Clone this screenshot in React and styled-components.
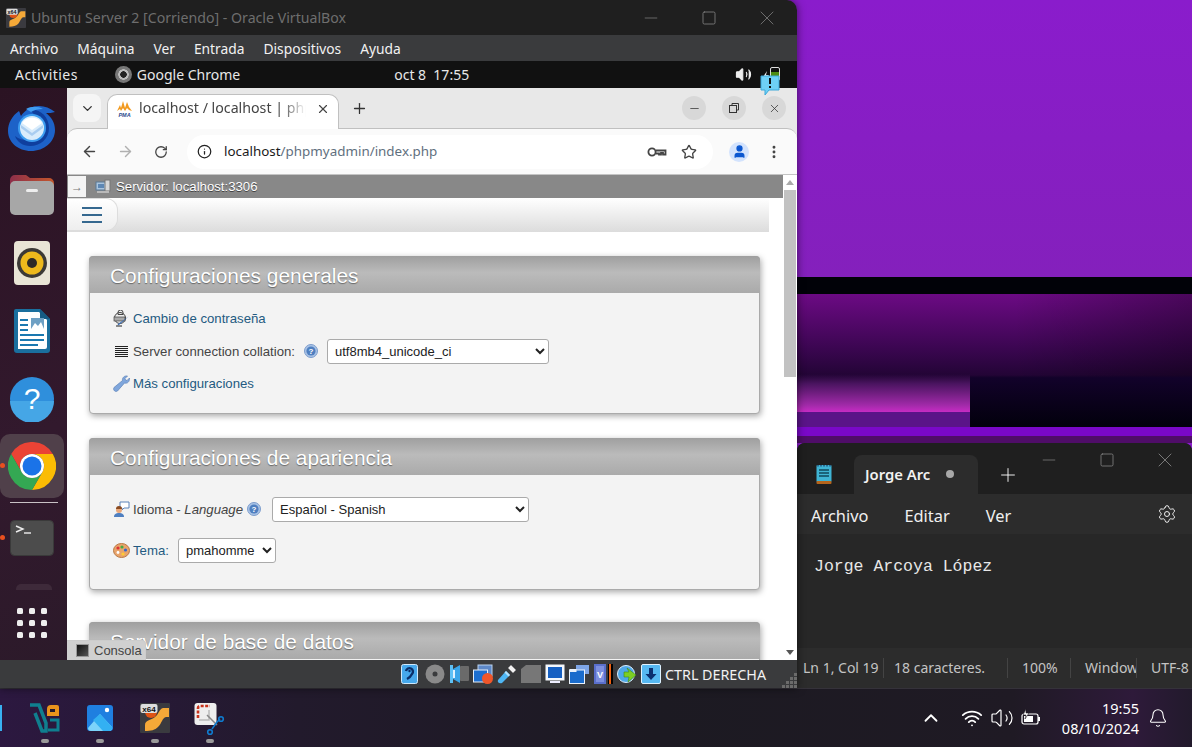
import React from 'react';
import styled, { createGlobalStyle } from 'styled-components';
import { ArrowLeft, ArrowRight, RotateCw, Star, EllipsisVertical, Plus, X, Minus, Square, Settings, Bell, ChevronUp, ChevronDown, Wifi, Volume2, Info, User } from 'lucide-react';

const GlobalStyle = createGlobalStyle`
	html, body {
		margin: 0;
		padding: 0;
		width: 1192px;
		height: 747px;
		overflow: hidden;
		background: #1c1a24;
	}
	* { box-sizing: border-box; }
`;

const Thunderbird = () => (
	<svg width="50" height="50" viewBox="0 0 50 50">
		<path d="M12 9C5 14 1 21 1 29c0 11 10 20 23 20s24-9 24-21c0-8-4-13-9-17 3 0 6 0 9-1-5-4-10-6-16-6-8 0-14 4-18 10-1-2-1-3-2-5z" fill="#1d62c8" />
		<path d="M22 8c10-2 20 6 20 18 0 11-9 18-19 18-7 0-13-4-15-10 4 3 8 4 12 4 7 0 13-5 13-12 0-6-4-14-11-18z" fill="#0f3f9e" />
		<path d="M19 7c5-3 12-3 17 0-5 0-9 1-12 3z" fill="#3f9cf0" />
		<circle cx="25" cy="26" r="14" fill="#3d9df0" />
		<circle cx="25" cy="26" r="12" fill="#d9ecfb" />
		<path d="M15 21l10 7 10-7a12 12 0 0 0-20 0z" fill="#fff" />
		<path d="M14 23l11 8 11-8v3l-11 8-11-8z" fill="#a9cdf0" />
	</svg>
);

const FolderIcon = () => (
	<svg width="46" height="42" viewBox="0 0 46 42">
		<defs>
			<linearGradient id="folderTab" x1="0" x2="1" y1="0" y2="0">
				<stop offset="0" stopColor="#8d2f4a" />
				<stop offset="1" stopColor="#c4562c" />
			</linearGradient>
		</defs>
		<path d="M1 6a5 5 0 0 1 5-5h11l4 3h19a5 5 0 0 1 5 5v10H1z" fill="url(#folderTab)" />
		<rect x="1" y="7" width="44" height="34" rx="5" fill="#a7a7a7" />
		<rect x="17" y="15" width="12" height="3" rx="1.5" fill="#eee" />
	</svg>
);

const RhythmIcon = () => (
	<svg width="38" height="46" viewBox="0 0 38 46">
		<rect x="1" y="1" width="36" height="44" rx="4" fill="#e9e5d6" />
		<circle cx="19" cy="23" r="15" fill="#3c3a36" />
		<circle cx="19" cy="23" r="11.5" fill="#edb91c" />
		<circle cx="19" cy="23" r="5" fill="#2c2a26" />
	</svg>
);

const WriterIcon = () => (
	<svg width="38" height="46" viewBox="0 0 38 46">
		<path d="M3 1h24l10 10v31a3 3 0 0 1-3 3H4a3 3 0 0 1-3-3V3a2 2 0 0 1 2-2z" fill="#1a6f9e" />
		<path d="M5 4h21l8 8v27a2 2 0 0 1-2 2H5z" fill="#fff" />
		<path d="M27 1l10 10H27z" fill="#155b84" />
		<path d="M7 11h8v2H7zM7 16h8v2H7zM7 21h8v2H7zM7 26h24v2H7zM7 31h24v2H7zM7 36h18v2H7z" fill="#1a78b0" />
		<rect x="18" y="10" width="13" height="11" fill="#6ea0c4" />
		<path d="M18 21l4-6 3 3 3-4 3 7z" fill="#fff" />
	</svg>
);

const HelpIcon = () => (
	<svg width="46" height="46" viewBox="0 0 46 46">
		<circle cx="23" cy="23" r="22" fill="#2f8fdc" />
		<path d="M1 25a22 22 0 0 0 44 0z" fill="#45a6e6" />
		<text x="23" y="33" textAnchor="middle" fontFamily="Liberation Sans, sans-serif" fontSize="30" fill="#fff">?</text>
	</svg>
);

const ChromeLogo = ({ size = 48 }) => (
	<svg width={size} height={size} viewBox="0 0 48 48">
		<path d="M24 12H44.8A24 24 0 0 0 3.2 12L13.6 30A12 12 0 0 1 24 12z" fill="#ea4335" />
		<path d="M44.8 12H24A12 12 0 0 1 34.4 30L24 48A24 24 0 0 0 44.8 12z" fill="#fbbc04" />
		<path d="M3.2 12L13.6 30A12 12 0 0 0 34.4 30L24 48A24 24 0 0 1 3.2 12z" fill="#34a853" />
		<circle cx="24" cy="24" r="12" fill="#fff" />
		<circle cx="24" cy="24" r="9.5" fill="#1a73e8" />
	</svg>
);

const TerminalIcon = () => (
	<svg width="44" height="36" viewBox="0 0 44 36">
		<rect x="0.5" y="0.5" width="43" height="35" rx="4" fill="#4c4c4c" stroke="#3a3a3a" />
		<path d="M6 6l7 3-7 3" fill="none" stroke="#eee" strokeWidth="1.4" />
		<path d="M14 13h7" stroke="#eee" strokeWidth="1.4" />
	</svg>
);

const VBoxLogo = ({ size = 20 }) => (
	<svg width={size} height={size} viewBox="0 0 30 30">
		<rect width="30" height="30" rx="1" fill="#3a3a3f" />
		<path d="M5 9a6 6 0 0 0 12 0z" fill="#df5314" />
		<path d="M5 28v-6c0-5 7-5 10-8 4-3 4-8 8-9h6v9h-3c-4 1-4 6-8 10-3 3-7 4-13 4z" fill="#f5a938" />
		<rect x="0.5" y="1" width="17" height="9" rx="2" fill="#ddd" />
		<text x="9" y="8.500" textAnchor="middle" fontFamily="Liberation Sans, sans-serif" fontWeight="700" fontSize="8" fill="#111">x64</text>
	</svg>
);

const PmaLogo = () => (
	<svg width="17" height="16" viewBox="0 0 17 16">
		<path d="M1 10l3-6 1 3 2-7 2 7 2-6 2 5 3 4-3-1-2-2-2 3-2-3-2 3-1-2z" fill="#f29a1f" />
		<text x="8.500" y="16" textAnchor="middle" fontFamily="Liberation Sans, sans-serif" fontWeight="700" fontStyle="italic" fontSize="5.500" fill="#2a4a8e">PMA</text>
	</svg>
);

const KeyIcon = () => (
	<svg width="20" height="12" viewBox="0 0 20 12" fill="none" stroke="#444" strokeWidth="1.8">
		<circle cx="5" cy="6" r="3.6" />
		<path d="M9 4.500h9.500v4h-2.500v-1.600h-2v1.600h-2V7.500H9" />
	</svg>
);

const ServerIcon = () => (
	<svg width="16" height="15" viewBox="0 0 16 15">
		<rect x="1" y="3" width="10" height="8" fill="#a9c4de" stroke="#5b7894" />
		<rect x="3" y="5" width="6" height="4" fill="#5d87b4" />
		<rect x="10" y="1" width="5" height="11" fill="#d8d8d8" stroke="#777" />
		<rect x="2" y="12" width="12" height="2" fill="#b9b9b9" />
	</svg>
);

const PasswordIcon = () => (
	<svg width="17" height="17" viewBox="0 0 17 17">
		<circle cx="7" cy="8" r="5.500" fill="#eee" stroke="#444" />
		<rect x="1" y="7" width="11" height="4" fill="#aaa" stroke="#444" strokeWidth=".7" />
		<path d="M5 2.500a2.500 2.500 0 0 1 5 0v2H5z" fill="none" stroke="#444" />
		<path d="M15.500 6.500L6 15l-1.500.5.5-1.500z" fill="#3b6fb6" />
		<path d="M3 16h6" stroke="#222" />
	</svg>
);

const CollationIcon = () => (
	<svg width="17" height="11" viewBox="0 0 17 11">
		<path d="M2 .5h13M2 2.500h13M2 4.500h13M2 6.500h13M2 8.500h13M2 10.500h13" stroke="#222" />
	</svg>
);

const WrenchIcon = () => (
	<svg width="17" height="17" viewBox="0 0 17 17">
		<path d="M1 12.500L9.500 5.500c-.5-2.500 1.500-5 5-4.500l-2.500 2.500.5 1.500 1.500.5L16.500 3c.3 3.500-2 6-5 5l-7 8c-2 1.500-5-1-3.500-3.500z" fill="#7fa6dc" stroke="#5b82b8" strokeWidth=".7" />
	</svg>
);

const HelpBadge = () => (
	<svg width="14" height="14" viewBox="0 0 14 14">
		<circle cx="7" cy="7" r="6.500" fill="#a9c3e6" stroke="#7d9dcc" />
		<circle cx="7" cy="7" r="4.600" fill="#4f7fc0" />
		<text x="7" y="10" textAnchor="middle" fontFamily="Liberation Sans, sans-serif" fontWeight="700" fontSize="8" fill="#fff">?</text>
	</svg>
);

const LanguageIcon = () => (
	<svg width="17" height="17" viewBox="0 0 17 17">
		<path d="M7 1h9v6H11l-2 2V7H7z" fill="#fff" stroke="#5b82b8" />
		<circle cx="6" cy="9" r="3" fill="#e9a77a" />
		<path d="M1 16c0-3 2-4 5-4s5 1 5 4z" fill="#4f7fc0" />
		<path d="M3 8a3 3 0 0 1 6 0z" fill="#8a4a20" />
	</svg>
);

const PaletteIcon = () => (
	<svg width="17" height="15" viewBox="0 0 17 15">
		<ellipse cx="8.500" cy="7.500" rx="8" ry="7" fill="#e8a46c" stroke="#b87844" />
		<circle cx="5" cy="5" r="1.600" fill="#d33" />
		<circle cx="9" cy="4" r="1.600" fill="#4a4" />
		<circle cx="12.500" cy="7" r="1.600" fill="#36c" />
		<circle cx="10" cy="11" r="1.600" fill="#fc3" />
		<circle cx="5" cy="9.500" r="1.400" fill="#fff" />
	</svg>
);

const NotepadIcon = () => (
	<svg width="16" height="20" viewBox="0 0 16 20">
		<rect x="0.500" y="1" width="15" height="17" rx="1" fill="#3fb4d4" />
		<rect x="0.500" y="17" width="15" height="3" rx="1" fill="#b5651d" />
		<path d="M3 6h10M3 9h10M3 12h10" stroke="#10485c" strokeWidth="1.300" />
		<path d="M2 1v1.500M5 1v1.500M8 1v1.500M11 1v1.500M14 1v1.500" stroke="#125" />
	</svg>
);

const BatteryTray = () => (
	<svg width="20" height="18" viewBox="0 0 20 18" fill="none">
		<rect x="1" y="5" width="16" height="10" rx="2" stroke="#fff" strokeWidth="1.200" />
		<rect x="17" y="8" width="2" height="4" fill="#fff" />
		<rect x="3" y="7" width="9" height="6" fill="#fff" />
		<path d="M5 0L2 6h3l-1 4 4-6H5z" fill="#fff" stroke="#1e1a20" strokeWidth=".6" />
	</svg>
);

const ChargeBolt = () => (
	<svg width="6" height="10" viewBox="0 0 6 10">
		<path d="M4 0L0 6h3L2 10l4-6H3z" fill="#eee" />
	</svg>
);

const HdIcon = () => (
	<svg width="17" height="20" viewBox="0 0 17 20">
		<rect x="0.500" y="0.500" width="16" height="19" rx="2" fill="#46a8ec" stroke="#cfe8fb" />
		<path d="M5 7a3.500 3.500 0 1 1 6 3c-1 2-3 4-5 5" fill="none" stroke="#0a2f6a" strokeWidth="2.400" />
		<circle cx="8.500" cy="7" r="1.200" fill="#0a2f6a" />
	</svg>
);

const DiscIcon = () => (
	<svg width="20" height="20" viewBox="0 0 20 20">
		<circle cx="10" cy="10" r="9.500" fill="#8a8a8a" />
		<circle cx="10" cy="10" r="2.500" fill="#3a3b3d" />
	</svg>
);

const AudioIcon = () => (
	<svg width="20" height="20" viewBox="0 0 20 20">
		<rect x="11" y="2" width="9" height="15" rx="1" fill="#6a6a6a" />
		<path d="M1 1h3v18H1z" fill="#5dc0f5" />
		<path d="M4 5l7-4v18l-7-4z" fill="#3aa6ea" />
		<path d="M4 6h2v8H4z" fill="#dff2ff" />
	</svg>
);

const NetIcon = () => (
	<svg width="20" height="20" viewBox="0 0 20 20">
		<rect x="5" y="1" width="14" height="11" fill="#5d88c8" stroke="#bcd4ef" />
		<rect x="0.500" y="6" width="14" height="12" fill="#1d6fd0" stroke="#e5eef8" />
		<circle cx="14.500" cy="14.500" r="5.500" fill="#f0562a" />
	</svg>
);

const UsbIcon = () => (
	<svg width="20" height="20" viewBox="0 0 20 20">
		<path d="M1 16l8-9 4 4-8 8c-3 1-5-1-4-3z" fill="#4eb6f4" />
		<path d="M11 4l3-3 5 5-3 3z" fill="#f2f2f2" stroke="#888" strokeWidth=".6" />
		<path d="M9 7l4 4-1.500 1.500-4-4z" fill="#b6e1fb" />
	</svg>
);

const SharedFolderIcon = () => (
	<svg width="20" height="18" viewBox="0 0 20 18">
		<path d="M0 4l5-4h15v18H0z" fill="#777" />
	</svg>
);

const DisplayIcon = () => (
	<svg width="20" height="20" viewBox="0 0 20 20">
		<rect x="0.500" y="0.500" width="19" height="16" fill="#f4f8fc" />
		<rect x="3" y="3" width="14" height="11" fill="#1660c2" />
		<rect x="5" y="17" width="10" height="2" fill="#eef" />
	</svg>
);

const MultiIcon = () => (
	<svg width="20" height="20" viewBox="0 0 20 20">
		<rect x="7" y="1" width="13" height="9" fill="#7fa6e6" />
		<rect x="0.500" y="6" width="15" height="13.500" fill="#1a6ccc" stroke="#eaf2fb" />
		<rect x="0.500" y="5" width="7" height="3" fill="#eaf2fb" />
	</svg>
);

const ChipIcon = () => (
	<svg width="14" height="20" viewBox="0 0 14 20">
		<rect x="1" y="0" width="12" height="20" fill="#5a6fcc" />
		<rect x="3" y="2" width="8" height="16" fill="#7d8fdf" />
		<text x="7" y="14" textAnchor="middle" fontFamily="Liberation Sans, sans-serif" fontWeight="700" fontSize="9" fill="#fff">V</text>
	</svg>
);

const GlobeArrow = () => (
	<svg width="20" height="20" viewBox="0 0 20 20">
		<circle cx="9" cy="10" r="8.500" fill="#4ea8e8" stroke="#dcefff" />
		<path d="M10 4l9 7-8 7 1-5H7V8h5z" fill="#7ccf24" stroke="#3d8a10" strokeWidth=".6" />
	</svg>
);

const DownIcon = () => (
	<svg width="20" height="20" viewBox="0 0 20 20">
		<rect x="0.500" y="0.500" width="19" height="19" rx="1.500" fill="#56b8f2" stroke="#dff2ff" />
		<path d="M8 4h4v6h3.500L10 16l-5.500-6H8z" fill="#0b2f70" />
	</svg>
);

const VsIcon = () => (
	<svg width="32" height="30" viewBox="0 0 32 30" fill="none">
		<path d="M1 2h9l7 18v8h-4L6 10" stroke="#0f7f8f" strokeWidth="3.500" />
		<path d="M19 27h10V17H21" stroke="#0f7f8f" strokeWidth="3" />
		<path d="M18 13V6a4 4 0 0 1 4-4h6a2 2 0 0 1 2 2v9z" fill="#e9941c" />
		<rect x="21" y="6" width="5" height="3" fill="#231a2b" />
	</svg>
);

const PhotosIcon = () => (
	<svg width="26" height="26" viewBox="0 0 26 26">
		<rect width="26" height="26" rx="3" fill="#1f7fe0" />
		<path d="M1 23L13 9l12 13a3 3 0 0 1-3 4H4a3 3 0 0 1-3-3z" fill="#7cd3fa" />
		<path d="M13 9l12 13a3 3 0 0 1-3 4h-6L6 15z" fill="#33b0f2" />
		<circle cx="20" cy="5" r="2.200" fill="#fff" />
	</svg>
);

const SnipIcon = () => (
	<svg width="31" height="33" viewBox="0 0 31 33">
		<rect x="0.500" y="0" width="22" height="22" rx="3" fill="#eee" />
		<path d="M4 15V5a2 2 0 0 1 2-2h10" fill="none" stroke="#c8321c" strokeWidth="2.600" strokeDasharray="3 1.500" />
		<path d="M5 17h10V7" fill="none" stroke="#bbb" strokeWidth="1.500" />
		<path d="M13 12l10 10" stroke="#888" strokeWidth="1.500" />
		<path d="M18 26l5-7 3-3" stroke="#0f7cd0" strokeWidth="1.500" fill="none" />
		<circle cx="27" cy="16" r="2.300" fill="none" stroke="#0f7cd0" strokeWidth="1.600" />
		<circle cx="16" cy="29" r="2.300" fill="none" stroke="#0f7cd0" strokeWidth="1.600" />
	</svg>
);

const BalloonIcon = () => (
	<svg width="20" height="21" viewBox="0 0 20 21">
		<path d="M1 1h18v14H9l-4 5v-5H1z" fill="#6ed0f6" stroke="#3fa9da" />
		<rect x="9" y="3" width="2" height="6" fill="#111" />
		<rect x="9" y="11" width="2" height="2" fill="#111" />
	</svg>
);

const GripIcon = () => (
	<svg width="15" height="15" viewBox="0 0 15 15" fill="#6b6b6b">
		<rect x="12" y="0" width="3" height="3" /><rect x="8" y="4" width="3" height="3" /><rect x="12" y="4" width="3" height="3" />
		<rect x="4" y="8" width="3" height="3" /><rect x="8" y="8" width="3" height="3" /><rect x="12" y="8" width="3" height="3" />
		<rect x="0" y="12" width="3" height="3" /><rect x="4" y="12" width="3" height="3" /><rect x="8" y="12" width="3" height="3" /><rect x="12" y="12" width="3" height="3" />
	</svg>
);

const App = () => {
	const dockApps = [<Thunderbird />, <FolderIcon />, <RhythmIcon />, <WriterIcon />, <HelpIcon />];
	return (
		<Desktop>
			<GlobalStyle />
			<Main>
				<VBoxWindow>
					<TitleBar>
						<VBoxLogo />
						<TitleText>Ubuntu Server 2 [Corriendo] - Oracle VirtualBox</TitleText>
						<WinButtons>
							<WinButton><Minus size={20} strokeWidth={0.9} /></WinButton>
							<WinButton><Square size={16} strokeWidth={1.3} /></WinButton>
							<WinButton><X size={24} strokeWidth={0.8} /></WinButton>
						</WinButtons>
					</TitleBar>
					<MenuBar>
						{['Archivo', 'Máquina', 'Ver', 'Entrada', 'Dispositivos', 'Ayuda'].map((m) => <span key={m}>{m}</span>)}
					</MenuBar>
					<GnomeBar>
						<Activities>Activities</Activities>
						<AppName>
							<ChromeCircle />
							Google Chrome
						</AppName>
						<Clock>oct 8&nbsp;&nbsp;17:55</Clock>
						<Tray>
							<Volume2 size={17} color="#eee" fill="#eee" strokeWidth={1.5} />
							<BatteryGroup>
								<ChargeBolt />
								<BatteryBox />
							</BatteryGroup>
							<Balloon><BalloonIcon /></Balloon>
						</Tray>
					</GnomeBar>
					<GuestArea>
						<Dock>
							<DockList>
								{dockApps.map((icon, i) => <DockItem key={i}>{icon}</DockItem>)}
								<DockItem $active $running><ChromeLogo /></DockItem>
								<DockSeparator />
								<DockItem $running><TerminalIcon /></DockItem>
								<DockCut />
							</DockList>
							<AppsGrid>
								{Array.from({ length: 9 }).map((_, i) => <i key={i} />)}
							</AppsGrid>
						</Dock>
						<Chrome>
							<TabStrip>
								<TabSearch><ChevronDown size={15} strokeWidth={2.2} color="#333" /></TabSearch>
								<Tab>
									<PmaLogo />
									<TabTitle>localhost / localhost | phpMyAdmin</TabTitle>
									<X size={14} strokeWidth={2} color="#444" />
								</Tab>
								<NewTab><Plus size={17} strokeWidth={1.8} color="#333" /></NewTab>
								<ChromeControls>
									<ChromeControl><Minus size={13} strokeWidth={1.4} color="#333" /></ChromeControl>
									<ChromeControl>
										<svg width="10" height="10" viewBox="0 0 10 10" fill="none" stroke="#333"><rect x="0.500" y="2.500" width="7" height="7" /><path d="M3 2.500V.5h6.500V7H7.500" /></svg>
									</ChromeControl>
									<ChromeControl><X size={13} strokeWidth={1.4} color="#333" /></ChromeControl>
								</ChromeControls>
							</TabStrip>
							<Toolbar>
								<NavIcon><ArrowLeft size={17} strokeWidth={2} color="#444" /></NavIcon>
								<NavIcon><ArrowRight size={17} strokeWidth={2} color="#b0b0b0" /></NavIcon>
								<NavIcon><RotateCw size={14} strokeWidth={2.2} color="#444" /></NavIcon>
								<Omnibox>
									<Info size={15} strokeWidth={2} color="#222" />
									<Url><b>localhost</b>/phpmyadmin/index.php</Url>
									<OmniIcons>
										<KeyIcon />
										<Star size={16} strokeWidth={2} color="#444" />
									</OmniIcons>
								</Omnibox>
								<Profile><User size={15} color="#0b57d0" fill="#0b57d0" /></Profile>
								<EllipsisVertical size={16} strokeWidth={2.4} color="#444" />
							</Toolbar>
							<Viewport>
								<Page>
									<ServerBar>
										<ArrowBox>→</ArrowBox>
										<ServerIcon />
										<span>Servidor: localhost:3306</span>
									</ServerBar>
									<NavBar>
										<Burger><i /><i /><i /></Burger>
									</NavBar>
									<Panel $h={158}>
										<PanelTitle>Configuraciones generales</PanelTitle>
										<PanelBody>
											<Row $h={24}>
												<RowIcon><PasswordIcon /></RowIcon>
												<PageLink>Cambio de contraseña</PageLink>
											</Row>
											<Row $h={42}>
												<RowIcon><CollationIcon /></RowIcon>
												<span>Server connection collation:</span>
												<HelpSlot $ml={9}><HelpBadge /></HelpSlot>
												<Select $w={222} $ml={9} defaultValue="utf8mb4_unicode_ci">
													<option>utf8mb4_unicode_ci</option>
												</Select>
											</Row>
											<Row $h={22}>
												<RowIcon><WrenchIcon /></RowIcon>
												<PageLink>Más configuraciones</PageLink>
											</Row>
										</PanelBody>
									</Panel>
									<Panel $h={152}>
										<PanelTitle>Configuraciones de apariencia</PanelTitle>
										<PanelBody $top={20}>
											<Row $h={28}>
												<RowIcon><LanguageIcon /></RowIcon>
												<span>Idioma - <em>Language</em></span>
												<HelpSlot $ml={4}><HelpBadge /></HelpSlot>
												<Select $w={257} $ml={11} defaultValue="Español - Spanish">
													<option>Español - Spanish</option>
												</Select>
											</Row>
											<Row $h={28} $mt={13}>
												<RowIcon><PaletteIcon /></RowIcon>
												<PageLink>Tema:</PageLink>
												<Select $w={98} $ml={9} defaultValue="pmahomme">
													<option>pmahomme</option>
												</Select>
											</Row>
										</PanelBody>
									</Panel>
									<Panel $h={152} $mt={32}>
										<PanelTitle>Servidor de base de datos</PanelTitle>
									</Panel>
								</Page>
								<Scrollbar>
									<ScrollArrow $up />
									<ScrollThumb />
									<ScrollArrow />
								</Scrollbar>
								<ConsoleTab>
									<ConsoleIcon />
									Consola
								</ConsoleTab>
							</Viewport>
						</Chrome>
					</GuestArea>
					<StatusBar>
						<HdSlot><HdIcon /></HdSlot>
						<DiscIcon />
						<AudioIcon />
						<NetIcon />
						<UsbIcon />
						<SharedFolderIcon />
						<DisplayIcon />
						<MultiIcon />
						<ChipGroup><ChipIcon /><CpuBar /></ChipGroup>
						<GlobeArrow />
						<DownIcon />
						<HostKey>CTRL DERECHA</HostKey>
						<Grip><GripIcon /></Grip>
					</StatusBar>
				</VBoxWindow>
				<RightSide>
					<Wallpaper>
						<Band $h={277} $bg="linear-gradient(180deg, #8a1ccc 0%, #8420bc 100%)" />
						<Band $h={17} $bg="#010208" />
						<WallScene>
							<GlowColumn>
								<GlowTop />
								<GlowBase />
							</GlowColumn>
							<DarkColumn />
						</WallScene>
						<Band $h={9} $bg="#7a08c8" />
						<Band $h={7} $bg="#4f0d68" />
					</Wallpaper>
					<Notepad>
						<NotepadTabs>
							<NotepadLogo><NotepadIcon /></NotepadLogo>
							<NotepadTab>
								<span>Jorge Arc</span>
								<UnsavedDot />
							</NotepadTab>
							<NotepadPlus><Plus size={22} strokeWidth={1} color="#fff" /></NotepadPlus>
							<NotepadControls>
								<NotepadControl><Minus size={20} strokeWidth={0.8} color="#8f8f8f" /></NotepadControl>
								<NotepadControl><Square size={16} strokeWidth={1.1} color="#8f8f8f" /></NotepadControl>
								<NotepadControl><X size={24} strokeWidth={0.8} color="#8f8f8f" /></NotepadControl>
							</NotepadControls>
						</NotepadTabs>
						<NotepadMenu>
							<span>Archivo</span>
							<span>Editar</span>
							<span>Ver</span>
							<GearSlot><Settings size={20} strokeWidth={1.2} color="#eee" /></GearSlot>
						</NotepadMenu>
						<Editor>Jorge Arcoya López</Editor>
						<NotepadStatus>
							<StatusCell $w={87} $pl={6}>Ln 1, Col 19</StatusCell>
							<StatusCell $w={124} $pl={10}>18 caracteres.</StatusCell>
							<StatusCell $w={63} $pl={14}>100%</StatusCell>
							<StatusCell $w={66} $pl={14}>Windows (CRLF)</StatusCell>
							<StatusCell $w={55} $pl={14} $last>UTF-8</StatusCell>
						</NotepadStatus>
					</Notepad>
				</RightSide>
			</Main>
			<Taskbar>
				<CutIcon />
				<TaskIcons>
					<TaskIcon><VsIcon /><Pill /></TaskIcon>
					<TaskIcon $pt={16}><PhotosIcon /><Pill /></TaskIcon>
					<TaskIcon><VBoxLogo size={30} /><Pill /></TaskIcon>
					<TaskIcon><SnipIcon /><Pill /></TaskIcon>
				</TaskIcons>
				<SystemTray>
					<ChevronSlot><ChevronUp size={22} strokeWidth={2} color="#fff" /></ChevronSlot>
					<Wifi size={22} strokeWidth={2} color="#fff" />
					<Volume2 size={24} strokeWidth={1.2} color="#fff" />
					<BatteryTray />
					<TaskClock>
						<span>19:55</span>
						<span>08/10/2024</span>
					</TaskClock>
					<Bell size={20} strokeWidth={1.3} color="#fff" />
				</SystemTray>
			</Taskbar>
		</Desktop>
	);
};

const Desktop = styled.div`
	width: 1192px;
	height: 747px;
	display: flex;
	flex-direction: column;
	overflow: hidden;
`;

const Main = styled.div`
	display: flex;
	height: 688px;
	background: #8a1ccc;
`;

// VirtualBox window
const VBoxWindow = styled.div`
	position: relative;
	z-index: 1;
	width: 797px;
	height: 688px;
	display: flex;
	flex-direction: column;
	border-top-right-radius: 10px;
	overflow: hidden;
	box-shadow: 0 0 8px rgba(0, 0, 0, 0.55);
`;

const TitleBar = styled.div`
	height: 35px;
	display: flex;
	align-items: center;
	padding-left: 6px;
	background: #1f1f1f;
`;

const TitleText = styled.span`
	margin-left: 5px;
	font: 14.150px "Noto Sans", sans-serif;
	color: #6e6e6e;
`;

const WinButtons = styled.div`
	margin-left: auto;
	margin-right: 1px;
	display: flex;
	color: #808080;
`;

const WinButton = styled.div`
	width: 58px;
	height: 32px;
	display: flex;
	align-items: center;
	justify-content: center;
`;

const MenuBar = styled.div`
	height: 26px;
	display: flex;
	align-items: center;
	gap: 19px;
	padding-left: 10px;
	background: #3a3b3d;
	font: 13.800px "Noto Sans", sans-serif;
	color: #f2f2f2;
`;

const GnomeBar = styled.div`
	height: 27px;
	display: flex;
	align-items: center;
	padding-left: 15px;
	padding-bottom: 1px;
	background: #111;
	font: 14px "Noto Sans", sans-serif;
	color: #e8e8e8;
`;

const Activities = styled.span`
	letter-spacing: 0.45px;
`;

const AppName = styled.div`
	display: flex;
	align-items: center;
	gap: 5px;
	margin-left: 37px;
`;

const ChromeCircle = styled.i`
	width: 17px;
	height: 17px;
	border-radius: 50%;
	background: radial-gradient(circle, #222 0 3px, #bbb 3.500px 5px, #777 5.500px);
`;

const Clock = styled.span`
	margin-left: 154px;
`;

const Tray = styled.div`
	position: relative;
	margin-left: auto;
	margin-right: 17px;
	display: flex;
	align-items: center;
	gap: 11px;
`;

const BatteryGroup = styled.div`
	display: flex;
	align-items: flex-end;
	gap: 1px;
`;

const BatteryBox = styled.i`
	width: 10px;
	height: 14px;
	border: 1px solid #ddd;
	border-radius: 2px;
	background: linear-gradient(180deg, transparent 35%, #4c8a12 35%);
`;

const Balloon = styled.div`
	position: absolute;
	right: 0;
	top: 9px;
	z-index: 3;
`;

const GuestArea = styled.div`
	height: 572px;
	display: flex;
`;

// Ubuntu dock
const Dock = styled.div`
	width: 67px;
	display: flex;
	flex-direction: column;
	background: linear-gradient(160deg, #2b1323, #32192d 60%, #2c1a2a);
`;

const DockList = styled.div`
	height: 502px;
	padding-top: 5px;
	display: flex;
	flex-direction: column;
	align-items: center;
	overflow: hidden;
`;

const DockItem = styled.div`
	position: relative;
	flex: none;
	width: 64px;
	height: ${(p) => (p.$active ? '64px' : '68px')};
	margin: ${(p) => (p.$active ? '1px 0 3px' : '0')};
	margin-left: -3px;
	display: flex;
	align-items: center;
	justify-content: center;
	border-radius: 10px;
	background: ${(p) => (p.$active ? '#50404a' : 'transparent')};

	&::before {
		content: "";
		display: ${(p) => (p.$running ? 'block' : 'none')};
		position: absolute;
		left: 0;
		top: 50%;
		width: 5px;
		height: 5px;
		margin-top: -3px;
		border-radius: 50%;
		background: #e9501f;
	}
`;

const DockSeparator = styled.div`
	flex: none;
	width: 48px;
	height: 1px;
	margin: 1px 0;
	background: #c9c2c6;
`;

const DockCut = styled.div`
	flex: none;
	width: 36px;
	height: 7px;
	margin-top: 12px;
	border-radius: 5px 5px 0 0;
	background: #3e2a3a;
`;

const AppsGrid = styled.div`
	margin-top: 18px;
	padding-left: 17px;
	display: grid;
	grid-template-columns: repeat(3, 6px);
	gap: 6px;

	i {
		width: 6px;
		height: 6px;
		border-radius: 1.500px;
		background: #eee;
	}
`;

// Chrome window
const Chrome = styled.div`
	width: 730px;
	display: flex;
	flex-direction: column;
	background: #e8e8e8;
`;

const TabStrip = styled.div`
	height: 40px;
	display: flex;
	align-items: flex-end;
	padding-left: 6px;
	background: #e8e8e8;
`;

const TabSearch = styled.div`
	width: 28px;
	height: 28px;
	margin-bottom: 6px;
	display: flex;
	align-items: center;
	justify-content: center;
	border-radius: 8px;
	background: #f5f5f5;
`;

const Tab = styled.div`
	position: relative;
	z-index: 1;
	width: 232px;
	height: 35px;
	margin-left: 6px;
	margin-bottom: -1px;
	padding: 0 8px 7px 8px;
	display: flex;
	align-items: center;
	border: 1px solid #c0c0c0;
	border-bottom: none;
	border-radius: 10px 10px 0 0;
	background: #fff;
`;

const TabTitle = styled.span`
	flex: 1;
	margin: 0 10px 2px 6px;
	overflow: hidden;
	white-space: nowrap;
	font: 14.200px "Noto Sans", sans-serif;
	color: #444;
	-webkit-mask-image: linear-gradient(90deg, #000 85%, transparent);
	mask-image: linear-gradient(90deg, #000 85%, transparent);
`;

const NewTab = styled.div`
	width: 24px;
	height: 24px;
	margin: 0 0 8px 8px;
	display: flex;
	align-items: center;
	justify-content: center;
`;

const ChromeControls = styled.div`
	margin-left: auto;
	margin-right: 11px;
	margin-bottom: 8px;
	display: flex;
	gap: 16px;
`;

const ChromeControl = styled.div`
	width: 24px;
	height: 24px;
	display: flex;
	align-items: center;
	justify-content: center;
	border-radius: 50%;
	background: #d8d8d8;
`;

const Toolbar = styled.div`
	height: 47px;
	display: flex;
	align-items: center;
	padding: 0 14px 0 4px;
	border-top: 1px solid #c0c0c0;
	border-bottom: 1px solid #c4c4c4;
	border-radius: 10px 10px 0 0;
	background: #fafafa;
`;

const NavIcon = styled.div`
	width: 36px;
	display: flex;
	justify-content: center;
`;

const Omnibox = styled.div`
	width: 526px;
	height: 34px;
	margin-left: 8px;
	padding: 0 16px 0 10px;
	display: flex;
	align-items: center;
	border-radius: 17px;
	background: #fff;
`;

const Url = styled.span`
	margin-left: 12px;
	padding-bottom: 1px;
	font: 13.400px "Noto Sans", sans-serif;
	color: #5f6f7e;

	b {
		font-weight: 400;
		color: #1a1a1a;
	}
`;

const OmniIcons = styled.div`
	margin-left: auto;
	display: flex;
	align-items: center;
	gap: 14px;
`;

const Profile = styled.div`
	width: 20px;
	height: 20px;
	margin-left: 16px;
	margin-right: 17px;
	display: flex;
	align-items: center;
	justify-content: center;
	border-radius: 50%;
	background: #d3e3fd;
`;

const Viewport = styled.div`
	position: relative;
	height: 485px;
	display: flex;
	overflow: hidden;
	background: #fff;
`;

// phpMyAdmin page
const Page = styled.div`
	width: 716px;
	display: flex;
	flex-direction: column;
	font: 13.200px "Liberation Sans", sans-serif;
	color: #444;
`;

const ServerBar = styled.div`
	flex: none;
	height: 23px;
	display: flex;
	align-items: center;
	gap: 5px;
	padding-left: 1px;
	background: #888;
	color: #fff;
	text-shadow: 0 1px 0 #444;

	svg { margin-left: 4px; }
`;

const ArrowBox = styled.div`
	width: 18px;
	height: 21px;
	display: flex;
	align-items: center;
	justify-content: center;
	background: #f4f4f4;
	color: #777;
	text-shadow: none;
	font-size: 12px;
`;

const NavBar = styled.div`
	flex: none;
	width: 702px;
	height: 34px;
	background: linear-gradient(180deg, #fff, #dcdcdc);
`;

const Burger = styled.div`
	width: 51px;
	height: 33px;
	padding: 0 15px;
	display: flex;
	flex-direction: column;
	justify-content: center;
	gap: 5px;
	border: 1px solid #ddd;
	border-left: none;
	border-radius: 0 12px 12px 0;
	background: linear-gradient(180deg, #fff, #eee);

	i {
		height: 2px;
		background: #35688f;
	}
`;

const Panel = styled.section`
	flex: none;
	width: 671px;
	height: ${(p) => p.$h}px;
	margin: ${(p) => p.$mt || 24}px 0 0 22px;
	display: flex;
	flex-direction: column;
	border: 1px solid #aaa;
	border-radius: 4px;
	background: #f3f3f3;
	box-shadow: 1px 2px 6px rgba(0, 0, 0, 0.35);
`;

const PanelTitle = styled.h2`
	flex: none;
	height: 37px;
	margin: -1px -1px 0;
	padding: 8px 0 0 21px;
	border-radius: 4px 4px 0 0;
	background: linear-gradient(180deg, #9f9f9f, #bbb 45%, #aaa);
	font: 400 20.900px/24px "Liberation Sans", sans-serif;
	color: #fff;
	text-shadow: 0 1px 1px #666;
`;

const PanelBody = styled.div`
	padding: ${(p) => p.$top || 13}px 0 0 23px;
`;

const Row = styled.div`
	height: ${(p) => p.$h}px;
	margin-top: ${(p) => p.$mt || 0}px;
	display: flex;
	align-items: center;
	white-space: nowrap;
`;

const RowIcon = styled.span`
	width: 20px;
	display: flex;
`;

const PageLink = styled.span`
	color: #235a81;
`;

const HelpSlot = styled.span`
	margin-left: ${(p) => p.$ml}px;
	display: flex;
`;

const Select = styled.select`
	width: ${(p) => p.$w}px;
	height: 25px;
	margin-left: ${(p) => p.$ml}px;
	padding-left: 3px;
	border: 1px solid #aaa;
	border-radius: 3px;
	background: #fff;
	font: 13px "Liberation Sans", sans-serif;
	color: #222;
`;

const Scrollbar = styled.div`
	width: 14px;
	margin-left: auto;
	display: flex;
	flex-direction: column;
	background: #fff;
`;

const ScrollArrow = styled.div`
	flex: none;
	height: 15px;
	display: flex;
	align-items: center;
	justify-content: center;

	&::after {
		content: "";
		border-left: 4px solid transparent;
		border-right: 4px solid transparent;
		${(p) => (p.$up ? 'border-bottom: 5px solid #aaa;' : 'border-top: 5px solid #555;')}
	}
`;

const ScrollThumb = styled.div`
	flex: none;
	height: 187px;
	margin: 0 1px 268px;
	background: #c2c2c2;
`;

const ConsoleTab = styled.div`
	position: absolute;
	left: 0;
	bottom: 0;
	width: 79px;
	height: 20px;
	display: flex;
	align-items: center;
	gap: 5px;
	padding-left: 9px;
	border: 1px solid #ccc;
	border-bottom: none;
	border-left: none;
	border-radius: 0 4px 0 0;
	background: #d0d0d0;
	font: 13px "Liberation Sans", sans-serif;
	color: #444;
`;

const ConsoleIcon = styled.i`
	width: 13px;
	height: 13px;
	border: 1px solid #999;
	background: linear-gradient(135deg, #111, #555);
`;

const StatusBar = styled.div`
	height: 28px;
	display: flex;
	align-items: center;
	justify-content: flex-end;
	gap: 4px;
	background: #3a3b3d;
`;

const HdSlot = styled.div`
	margin-right: 3px;
	display: flex;
`;

const ChipGroup = styled.div`
	display: flex;
	gap: 1px;
`;

const CpuBar = styled.i`
	width: 5px;
	height: 20px;
	background: linear-gradient(90deg, #000 30%, #f06010 30% 70%, #000 70%);
`;

const HostKey = styled.span`
	width: 117px;
	font: 14.300px "Noto Sans", sans-serif;
	color: #f2f2f2;
`;

const Grip = styled.div`
	width: 15px;
	height: 28px;
	margin-left: -4px;
	display: flex;
	align-items: flex-end;
`;

// right side of the desktop
const RightSide = styled.div`
	width: 395px;
	display: flex;
	flex-direction: column;
`;

const Wallpaper = styled.div`
	height: 443px;
	display: flex;
	flex-direction: column;
`;

const Band = styled.div`
	flex: none;
	height: ${(p) => p.$h}px;
	background: ${(p) => p.$bg};
`;

const WallScene = styled.div`
	height: 133px;
	display: flex;
	background:
		linear-gradient(90deg, transparent 55%, rgba(0, 0, 0, 0.3) 100%),
		linear-gradient(180deg, #6c0a84 0%, #3c0652 40%, #1e0430 65%, #16032a 100%);
`;

const GlowColumn = styled.div`
	width: 173px;
	display: flex;
	flex-direction: column;
`;

const GlowTop = styled.div`
	height: 118px;
	background: linear-gradient(180deg, transparent 68%, #4a1460 76%, #a02aa8 94%, #c62cc4 100%);
`;

const GlowBase = styled.div`
	height: 15px;
	background: #5a1488;
`;

const DarkColumn = styled.div`
	flex: 1;
	background: linear-gradient(180deg, transparent 0 61%, #12022a 63%, #02000c 100%);
`;

// Notepad window
const Notepad = styled.div`
	height: 245px;
	display: flex;
	flex-direction: column;
	border-radius: 8px 8px 0 0;
	overflow: hidden;
	background: #202020;
`;

const NotepadTabs = styled.div`
	height: 51px;
	flex: none;
	display: flex;
	align-items: flex-end;
	padding-left: 19px;
	background: #1f1f1f;

	& > * { flex: none; }
`;

const NotepadLogo = styled.div`
	height: 40px;
	width: 38px;
	display: flex;
	align-items: center;
`;

const NotepadTab = styled.div`
	width: 124px;
	height: 39px;
	padding: 0 0 1px 11px;
	display: flex;
	align-items: center;
	border-radius: 8px 8px 0 0;
	background: #2c2c2c;
	font: 600 14.800px "Noto Sans", sans-serif;
	color: #f2f2f2;
`;

const UnsavedDot = styled.i`
	width: 8px;
	height: 8px;
	margin-left: 16px;
	border-radius: 50%;
	background: #a8a8a8;
`;

const NotepadPlus = styled.div`
	width: 24px;
	height: 39px;
	margin-left: 18px;
	display: flex;
	align-items: center;
	justify-content: center;
`;

const NotepadControls = styled.div`
	align-self: flex-start;
	margin-top: 7px;
	display: flex;
`;

const NotepadControl = styled.div`
	width: 58px;
	display: flex;
	justify-content: center;
	align-items: center;
	height: 20px;
`;

const NotepadMenu = styled.div`
	height: 40px;
	flex: none;
	display: flex;
	align-items: center;
	gap: 36px;
	padding: 2px 0 0 14px;
	background: #2c2c2c;
	font: 16.400px "Noto Sans", sans-serif;
	color: #f0f0f0;
`;

const GearSlot = styled.div`
	margin-left: auto;
	margin-right: 15px;
	margin-top: -3px;
	display: flex;
`;

const Editor = styled.div`
	height: 114px;
	flex: none;
	padding: 23px 0 0 17px;
	background: #272727;
	font: 16.500px/19px "Liberation Mono", monospace;
	color: #e8e8e8;
`;

const NotepadStatus = styled.div`
	flex: 1;
	display: flex;
	align-items: center;
	background: #2c2c2c;
	font: 14px "Noto Sans", sans-serif;
	color: #c4c4c4;
`;

const StatusCell = styled.div`
	flex: none;
	width: ${(p) => p.$w}px;
	height: 20px;
	padding-left: ${(p) => p.$pl}px;
	overflow: hidden;
	white-space: nowrap;
	line-height: 20px;
	border-right: ${(p) => (p.$last ? 'none' : '1px solid #444')};
`;

// Windows taskbar
const Taskbar = styled.div`
	height: 59px;
	flex: none;
	display: flex;
	align-items: flex-start;
	position: relative;
	border-top: 1px solid #35323a;
	background: linear-gradient(90deg, #2c1840 0%, #221a2c 25%, #1c1a22 55%, #1f1a24 85%, #2e1a3a 95%, #221a2c 100%);
`;

const CutIcon = styled.i`
	width: 2px;
	height: 26px;
	margin-top: 16px;
	background: #38b0f0;
`;

const TaskIcons = styled.div`
	display: flex;
	margin-left: 15px;
`;

const TaskIcon = styled.div`
	width: 55px;
	height: 58px;
	padding-top: ${(p) => p.$pt || 14}px;
	display: flex;
	flex-direction: column;
	align-items: center;
	position: relative;

	svg { flex: none; }
`;

const Pill = styled.i`
	position: absolute;
	bottom: 4px;
	left: 50%;
	width: 8px;
	height: 4px;
	margin-left: -4px;
	border-radius: 2px;
	background: #9a9a9a;
`;

const SystemTray = styled.div`
	margin-left: auto;
	height: 58px;
	padding-right: 24px;
	display: flex;
	align-items: center;
	gap: 7px;
	color: #fff;
`;

const ChevronSlot = styled.div`
	display: flex;
	margin-right: 12px;
`;

const TaskClock = styled.div`
	margin: 0 2px 0 14px;
	display: flex;
	flex-direction: column;
	align-items: flex-end;
	font: 14.500px/20px "Noto Sans", sans-serif;
	color: #fff;
`;

export default App;
